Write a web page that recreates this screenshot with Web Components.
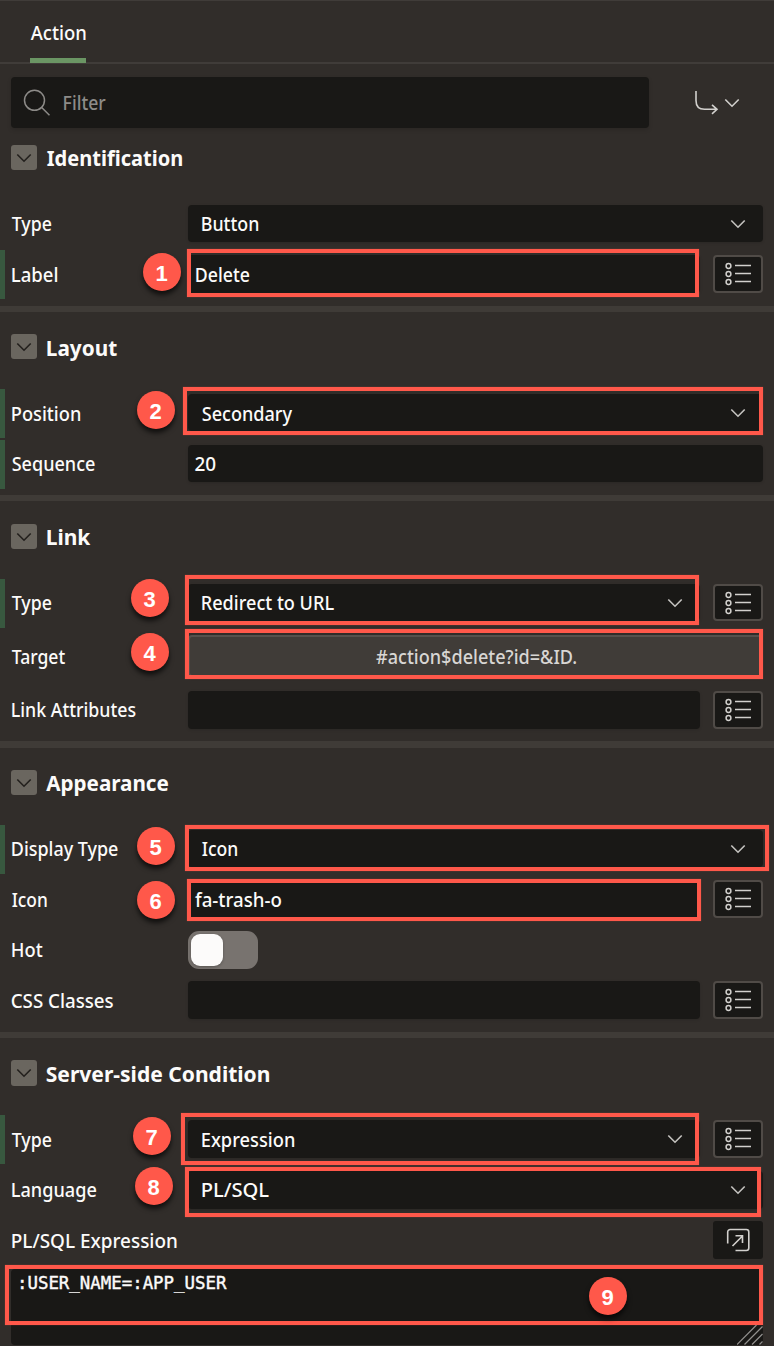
<!DOCTYPE html>
<html lang="en">
<head>
<meta charset="utf-8">
<title>Property Editor</title>
<style>
html,body{margin:0;padding:0;background:#312d2a}
body{width:774px;height:1346px;overflow:hidden;position:relative;color:#fcfbfa;font-family:"Noto Sans","Open Sans",sans-serif;font-size:19.5px;font-weight:500}
</style>
</head>
<body>
<property-editor></property-editor>
<script>
const define = (name, css, html, setup) => {
  const t = document.createElement('template');
  t.innerHTML = `<style>${css}</style>${html}`;
  customElements.define(name, class extends HTMLElement {
    connectedCallback() {
      if (this.shadowRoot) return;
      this.attachShadow({mode: 'open'}).appendChild(t.content.cloneNode(true));
      if (setup) setup.call(this, this.shadowRoot);
    }
  });
};

const ctx = document.createElement('canvas').getContext('2d');
define('fit-text',
  `:host{display:block;white-space:nowrap;flex:none}
   span{display:inline-block;transform-origin:0 50%}`,
  `<span><slot></slot></span>`,
  function (root) {
    const cs = getComputedStyle(this);
    ctx.font = `${cs.fontWeight} ${cs.fontSize} ${cs.fontFamily}`;
    const m = ctx.measureText(this.textContent);
    const ink = m.actualBoundingBoxLeft + m.actualBoundingBoxRight;
    const w = parseFloat(this.getAttribute('w'));
    const dx = parseFloat(this.getAttribute('dx') || '0.7');
    const k = w / ink;
    this.style.width = w + 'px';
    root.querySelector('span').style.transform =
      `translate(${(m.actualBoundingBoxLeft * k + dx).toFixed(2)}px, var(--dy, 0px)) scaleX(${k.toFixed(4)})`;
  });

define('chevron-icon', `:host{display:block;width:16px;height:10px;flex:none}svg{display:block}`,
  `<svg width="16" height="10" viewBox="0 0 16 10" fill="none" stroke="currentColor" stroke-width="1.6"><path d="M1.300 1.500 8 8.200 14.700 1.500"/></svg>`);

define('list-button',
  `:host{display:flex;box-sizing:border-box;width:50px;height:var(--fh,38px);border:2px solid #504b47;border-radius:4px;background:#191816;align-items:center;justify-content:center;flex:none}`,
  `<svg width="26" height="24" viewBox="0 0 26 24" fill="none" stroke="#d2d0cd"><g stroke-width="1.5"><circle cx="3.5" cy="4" r="2.400"/><circle cx="3.5" cy="12" r="2.400"/><circle cx="3.5" cy="20" r="2.400"/></g><path stroke-width="1.5" d="M10 3.5H26M10 11.5H26M10 19.5H26"/></svg>`);

define('expand-button',
  `:host{display:flex;width:50px;height:38px;border-radius:3px;background:#191816;align-items:center;justify-content:center;flex:none}`,
  `<svg width="24" height="24" viewBox="0 0 24 24" fill="none" stroke="#d2d0cd" stroke-width="1.6"><path d="M1.7 15.5V4a2.5 2.5 0 0 1 2.5-2.5H20.300a2.500 2.500 0 0 1 2.500 2.500V20a2.500 2.500 0 0 1-2.500 2.500H9.500M6.500 18 16.500 8M9.500 7.800H16.500V15"/></svg>`);

define('toggle-switch',
  `:host{display:block;box-sizing:border-box;width:70px;height:38px;border-radius:11px;background:#78736f;padding:3px}
   i{display:block;width:32px;height:32px;border-radius:9px;background:#fcfbfa;box-shadow:0 1px 3px #0004}`, `<i></i>`);

define('field-box',
  `:host{display:flex;box-sizing:border-box;flex:1;height:var(--fh,37px);line-height:37px;border-radius:4px;background:#191816;padding-left:7px;align-items:flex-start;box-shadow:0 1px 3px #0002}
   :host([select]){padding:0 17px 0 13px;justify-content:space-between}
   :host([button]){background:#403c38;color:#d8d6d3;padding:0;justify-content:center;height:42px;border:2px solid #55514d;line-height:39px}
   chevron-icon{display:none;color:#c5c3c0;margin-top:13.500px}
   :host([select]) chevron-icon{display:block}`,
  `<slot></slot><chevron-icon></chevron-icon>`);

define('prop-row',
  `:host{display:grid;grid-template-columns:177px 1fr;box-sizing:border-box;height:var(--h,50px);padding:5px 11px 0 11px;line-height:37px;align-items:start;background:linear-gradient(#38583f,#38583f) no-repeat 0 0/0 0}
   :host([changed]){background-size:5px 49px}
   :host([low]){--dy:1px}
   div{display:flex;gap:13px;min-width:0}`,
  `<slot name="label"></slot><div><slot></slot></div>`);

define('prop-section',
  `:host{display:block;border-bottom:var(--sep,6px) solid #3f3b37}
   header{display:flex;gap:9px;box-sizing:border-box;height:var(--head,77px);padding:var(--top,22px) 0 0 11px;font-size:22px;font-weight:700;line-height:var(--tl,25px)}
   i{display:flex;width:26px;height:var(--box,25px);border-radius:3px;background:#6a665f;color:#23201d;align-items:center;justify-content:center}
   slot[name=title]::slotted(*){font-size:22px;font-weight:700}`,
  `<header><i><chevron-icon></chevron-icon></i><slot name="title"></slot></header><slot></slot>`);

define('tab-bar',
  `:host{display:block;box-sizing:border-box;height:64px;border-top:1px solid #403c39;border-bottom:2px solid #403c39;padding-left:30px}
   div{width:56px;height:57px;line-height:63px;border-bottom:5px solid #6b9664}`,
  `<div><fit-text w="55">Action</fit-text></div>`);

define('filter-bar',
  `:host{display:flex;height:51px;padding:13px 34px 0 11px;justify-content:space-between;align-items:center;color:#d2d0cd}
   .f{display:flex;width:638px;height:51px;border-radius:4px;background:#191816;color:#8d8b88;align-items:center;box-shadow:0 2px 4px #0002}
   .f svg{margin:0 11px 0 12px}
   .g{display:flex;align-items:center;gap:5px}`,
  `<div class="f"><svg width="28" height="28" viewBox="0 0 28 28" fill="none" stroke="currentColor" stroke-width="1.5"><circle cx="11.500" cy="11.300" r="10"/><path d="M18.700 18.500 26.500 26.300"/></svg><fit-text w="42" dx="1.5">Filter</fit-text></div>
   <div class="g"><svg width="25" height="26" viewBox="0 0 25 26" fill="none" stroke="currentColor" stroke-width="1.600"><path d="M2 1V10.500Q2 19.300 10.500 19.300H23M18 14.800 23 19.300 18 23.800"/></svg><chevron-icon></chevron-icon></div>`);

define('code-area',
  `:host{display:block;box-sizing:border-box;margin:3px 11px 0;height:76px;border-radius:4px;background:#191816;padding:0 0 0 9px;font:17.300px/28px "DejaVu Sans Mono",monospace;-webkit-text-stroke:.4px;position:relative}
   svg{position:absolute;right:0;bottom:0}`,
  `<slot></slot><svg width="26" height="20" viewBox="0 0 26 20" fill="none" stroke="#92908e" stroke-width="1.200"><path d="M0 19.500 19.500 0M7.500 19.500 25.500 1.500M15 19.500 25.500 9M22.500 19.500 25.500 16.500"/></svg>`);

/* Callouts that lie over the form */
define('call-out',
  `:host{position:absolute;box-sizing:border-box;border:4px solid #ff584a;box-shadow:0 0 1px #ff584a80}`, ``,
  function () {
    const [l, t, r, b] = this.getAttribute('box').split(' ').map(Number);
    Object.assign(this.style, {left: l + 'px', top: t + 'px', width: r - l + 'px', height: b - t + 'px'});
  });
define('num-badge',
  `:host{position:absolute;box-sizing:border-box;width:38px;height:38px;padding-right:1px;border-radius:50%;background:#ff584a;color:#fff;text-align:center;font:bold 22px/41px "Liberation Sans",Arial,sans-serif;box-shadow:0 4px 5px #000a}`,
  `<slot></slot>`,
  function () {
    const [x, y] = this.getAttribute('at').split(' ').map(Number);
    Object.assign(this.style, {left: x - 19 + 'px', top: y - 19 + 'px'});
  });

define('property-editor',
  `:host{display:block;width:774px}
   prop-section.last{--sep:0px}`,
  `<tab-bar></tab-bar>
   <filter-bar></filter-bar>
   <prop-section style="--head:72px;--top:17px"><fit-text slot="title" w="135.500">Identification</fit-text>
     <prop-row><fit-text slot="label" w="40">Type</fit-text><field-box select><fit-text w="56.500">Button</fit-text></field-box></prop-row>
     <prop-row changed low style="--h:56px;--fh:38px"><fit-text slot="label" w="45.500">Label</fit-text><field-box><fit-text w="54">Delete</fit-text></field-box><list-button></list-button></prop-row>
   </prop-section>
   <prop-section style="--tl:27px"><fit-text slot="title" w="70">Layout</fit-text>
     <prop-row changed low style="--h:51px"><fit-text slot="label" w="68.500">Position</fit-text><field-box select><fit-text w="91">Secondary</fit-text></field-box></prop-row>
     <prop-row changed style="--h:55px"><fit-text slot="label" w="83.500">Sequence</fit-text><field-box><fit-text w="21.500" dx="-0.5">20</fit-text></field-box></prop-row>
   </prop-section>
   <prop-section style="--head:78px;--top:23px;--sep:7px"><fit-text slot="title" w="44">Link</fit-text>
     <prop-row changed style="--h:51px;--fh:37px"><fit-text slot="label" w="40">Type</fit-text><field-box select><fit-text w="132">Redirect to URL</fit-text></field-box><list-button></list-button></prop-row>
     <prop-row style="--h:56px;line-height:43px"><fit-text slot="label" w="53">Target</fit-text><field-box button><fit-text w="200" dx="0.01">#action$delete?id=&amp;ID.</fit-text></field-box></prop-row>
     <prop-row style="--h:55px;--fh:38px"><fit-text slot="label" w="124">Link Attributes</fit-text><field-box></field-box><list-button></list-button></prop-row>
   </prop-section>
   <prop-section><fit-text slot="title" w="122.500" dx="0.2">Appearance</fit-text>
     <prop-row changed><fit-text slot="label" w="106.500">Display Type</fit-text><field-box select><fit-text w="35.500">Icon</fit-text></field-box></prop-row>
     <prop-row low style="--h:51px;--fh:38px"><fit-text slot="label" w="35">Icon</fit-text><field-box><fit-text w="86" dx="0.01">fa-trash-o</fit-text></field-box><list-button></list-button></prop-row>
     <prop-row><fit-text slot="label" w="30.500">Hot</fit-text><toggle-switch></toggle-switch></prop-row>
     <prop-row low style="--h:56px;--fh:38px"><fit-text slot="label" w="101.500">CSS Classes</fit-text><field-box></field-box><list-button></list-button></prop-row>
   </prop-section>
   <prop-section class="last" style="--head:77px;--box:26px;--tl:27px"><fit-text slot="title" w="222.500">Server-side Condition</fit-text>
     <prop-row changed low style="--h:51px;--fh:38px"><fit-text slot="label" w="40">Type</fit-text><field-box select><fit-text w="92.500">Expression</fit-text></field-box><list-button></list-button></prop-row>
     <prop-row style="--fh:38px"><fit-text slot="label" w="85">Language</fit-text><field-box select><fit-text w="67">PL/SQL</fit-text></field-box></prop-row>
     <prop-row low style="grid-template-columns:1fr auto"><fit-text slot="label" w="165">PL/SQL Expression</fit-text><expand-button></expand-button></prop-row>
     <code-area><fit-text w="206" dx="1">:USER_NAME=:APP_USER</fit-text></code-area>
   </prop-section>
   <call-out box="187 249 699 297"></call-out><call-out box="183 387 763 435"></call-out>
   <call-out box="185 575 699 625"></call-out><call-out box="185 629 763 679"></call-out>
   <call-out box="185 825 769 871"></call-out><call-out box="187 879 701 921"></call-out>
   <call-out box="181 1113 699 1165"></call-out><call-out box="185 1167 761 1217"></call-out>
   <call-out box="5 1265 763 1325"></call-out>
   <num-badge at="162 272">1</num-badge><num-badge at="156 410">2</num-badge><num-badge at="150 598">3</num-badge>
   <num-badge at="150 652">4</num-badge><num-badge at="156 846">5</num-badge><num-badge at="156 900">6</num-badge>
   <num-badge at="152 1136">7</num-badge><num-badge at="154 1186">8</num-badge><num-badge at="608 1296">9</num-badge>`);
</script>
</body>
</html>
